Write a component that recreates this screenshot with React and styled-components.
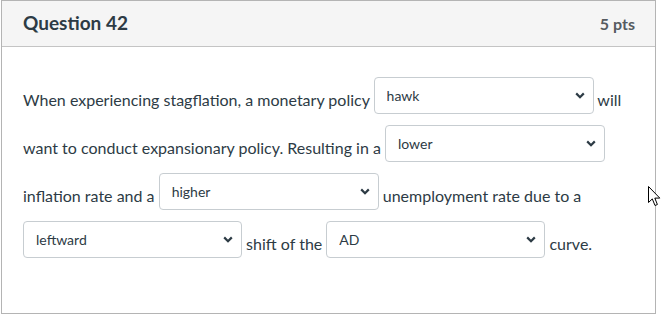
import React from "react";
import styled, { createGlobalStyle } from "styled-components";

const GlobalStyle = createGlobalStyle`
	html, body {
		margin: 0;
		padding: 0;
		background: #ffffff;
	}
	body {
		font-family: Lato, "Noto Sans", sans-serif;
		color: #2d3b45;
	}
`;

const Page = styled.div`
	position: relative;
	width: 662px;
	height: 322px;
	padding-left: 1px;
	box-sizing: border-box;
`;

const Card = styled.div`
	width: 655px;
	height: 314px;
	box-sizing: border-box;
	border: 1px solid #b4b4b4;
	background: #fff;
`;

const Header = styled.div`
	display: flex;
	justify-content: space-between;
	align-items: baseline;
	height: 46px;
	box-sizing: border-box;
	padding: 10px 20px 0 21px;
	background: #f5f5f5;
	border-bottom: 1px solid #c4c4c4;
`;

const Title = styled.h2`
	margin: 0;
	font-size: 19px;
	font-weight: 700;
	color: #2d3b45;
`;

const Points = styled.div`
	font-size: 16px;
	font-weight: 700;
	color: #555b60;
`;

const Body = styled.div`
	padding: 29px 20px 0 21px;
`;

const Text = styled.p`
	margin: 0;
	font-size: 16px;
	line-height: 48px;
	color: #2d3b45;
`;

const SelectWrap = styled.span`
	position: relative;
	display: inline-flex;
	vertical-align: 5px;
`;

const Select = styled.select`
	appearance: none;
	width: ${(p) => p.$width || 220}px;
	height: 37px;
	box-sizing: border-box;
	padding: 8px 30px 7px 12px;
	border: 1px solid #c7cdd1;
	border-radius: 4px;
	background: #fff;
	font-family: Lato, "Noto Sans", sans-serif;
	font-size: 14px;
	line-height: 20px;
	color: #2d3b45;
`;

const Chevron = styled.svg`
	position: absolute;
	right: 9px;
	top: 15px;
	width: 10px;
	height: 7px;
	pointer-events: none;
`;

const Cursor = styled.svg`
	position: absolute;
	left: 648px;
	top: 186px;
	width: 13px;
	height: 21px;
`;

function Dropdown({ value, width }) {
	return (
		<SelectWrap>
			<Select $width={width} defaultValue={value} aria-label={value}>
				<option value={value}>{value}</option>
			</Select>
			<Chevron viewBox="0 0 10 7">
				<path d="M1.2 1.4 L5 5.2 L8.8 1.4" fill="none" stroke="#2d3b45" strokeWidth="2.2" />
			</Chevron>
		</SelectWrap>
	);
}

export default function App() {
	return (
		<Page>
			<GlobalStyle />
			<Card>
				<Header>
					<Title>Question 42</Title>
					<Points>5 pts</Points>
				</Header>
				<Body>
					<Text>
						When experiencing stagflation, a monetary policy <Dropdown value="hawk" /> will
						want to conduct expansionary policy. Resulting in a <Dropdown value="lower" />{" "}
						inflation rate and a <Dropdown value="higher" /> unemployment rate due to a{" "}
						<Dropdown value="leftward" width={219} /> shift of the <Dropdown value="AD" width={219} />{" "}
						curve.
					</Text>
				</Body>
			</Card>
			<Cursor viewBox="0 0 13 21">
				<path
					d="M0.5 0.5 L0.5 16.5 L4.3 12.9 L7 19.5 L9.4 18.5 L6.8 12.1 L11.8 12.1 Z"
					fill="#fff"
					stroke="#000"
					strokeWidth="1"
					strokeLinejoin="miter"
				/>
			</Cursor>
		</Page>
	);
}
